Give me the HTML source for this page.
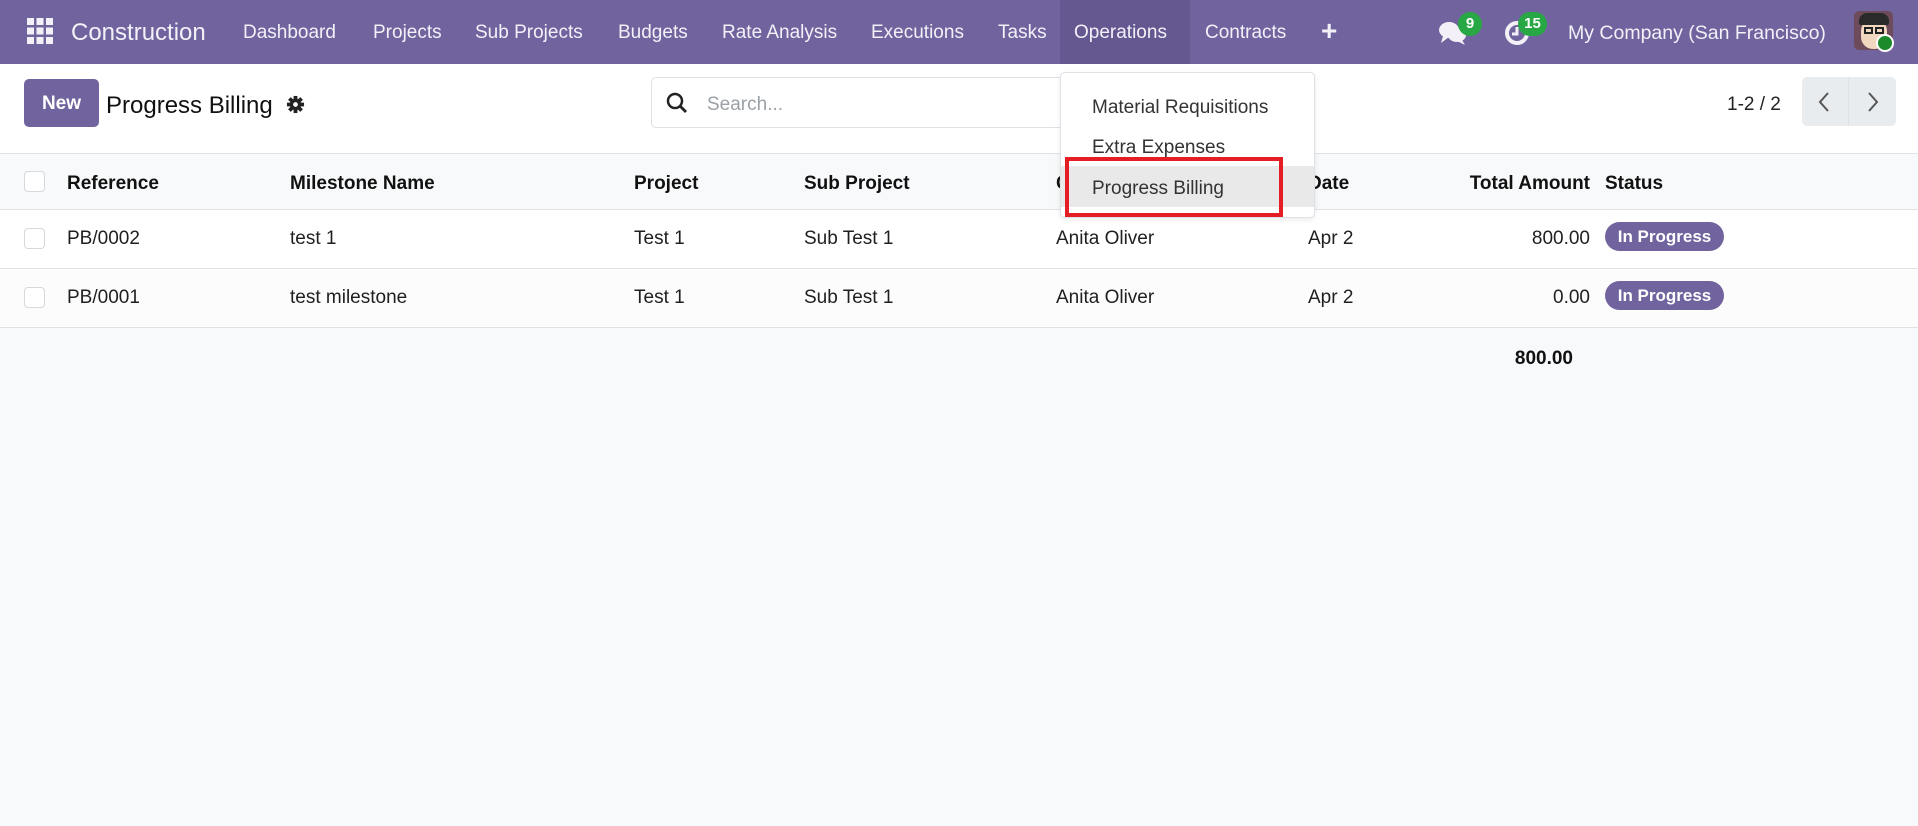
<!DOCTYPE html>
<html><head><meta charset="utf-8"><style>
*{box-sizing:border-box;margin:0;padding:0}
body{width:1918px;height:826px;overflow:hidden;background:#f8f9fa;font-family:"Liberation Sans",sans-serif;color:#1f1f1f;position:relative}
.nav{position:absolute;left:0;top:0;width:1918px;height:64px;background:#71639e;color:#fff}
.nav span{position:absolute;top:22px;font-size:19px;color:#f3f0f8}
.cp{position:absolute;left:0;top:64px;width:1918px;height:90px;background:#fff;border-bottom:1px solid #dee2e6}
.abs{position:absolute}
.th{position:absolute;top:154px;height:56px;width:1918px;background:#f8f9fa;border-bottom:1px solid #dee2e6}
.row{position:absolute;left:0;width:1918px;height:59px;border-bottom:1px solid #dee2e6}
.cell{position:absolute;font-size:19px;top:18px}
.hc{position:absolute;font-size:19px;font-weight:bold;top:19px;color:#111}
.cb{position:absolute;left:24px;width:21px;height:21px;border:1px solid #d5d8dc;border-radius:4px;background:#fff}
.badge{position:absolute;left:1605px;top:12px;width:119px;height:29px;border-radius:15px;background:#71639e;color:#fff;font-weight:bold;font-size:17px;text-align:center;line-height:29px}
.dd{position:absolute;left:1060px;top:72px;width:255px;height:146px;background:#fff;border:1px solid #dee2e6;border-radius:5px;box-shadow:0 2px 6px rgba(0,0,0,.08)}
.dd div{position:absolute;left:31px;font-size:19px;color:#333}
</style></head><body>
<div class="nav">
 <svg class="abs" style="left:27px;top:18px" width="26" height="26" viewBox="0 0 26 26" fill="#f3f0f8">
  <rect x="0" y="0" width="7" height="7"/><rect x="9.5" y="0" width="7" height="7"/><rect x="19" y="0" width="7" height="7"/>
  <rect x="0" y="9.5" width="7" height="7"/><rect x="9.5" y="9.5" width="7" height="7"/><rect x="19" y="9.5" width="7" height="7"/>
  <rect x="0" y="19" width="7" height="7"/><rect x="9.5" y="19" width="7" height="7"/><rect x="19" y="19" width="7" height="7"/></svg>
 <span style="left:71px;top:19px;font-size:24px">Construction</span>
 <span style="left:243px">Dashboard</span>
 <span style="left:373px">Projects</span>
 <span style="left:475px">Sub Projects</span>
 <span style="left:618px">Budgets</span>
 <span style="left:722px">Rate Analysis</span>
 <span style="left:871px">Executions</span>
 <span style="left:998px">Tasks</span>
 <div class="abs" style="left:1060px;top:0;width:130px;height:64px;background:#655891"></div>
 <span style="left:1074px">Operations</span>
 <span style="left:1205px">Contracts</span>
 <span style="left:1321px;top:15px;font-size:28px;font-weight:bold">+</span>
 <svg class="abs" style="left:1438px;top:19px" width="30" height="28" viewBox="0 0 30 28" fill="#f3f0f8"><ellipse cx="11" cy="11" rx="10" ry="8"/><path d="M5 17 L3 24 L11 18Z"/><ellipse cx="19" cy="16" rx="9" ry="7"/><path d="M24 21 L27 26 L19 22Z"/></svg>
 <div class="abs" style="left:1458px;top:12px;width:24px;height:24px;border-radius:12px;background:#28a745;color:#fff;font-size:15px;font-weight:bold;text-align:center;line-height:24px">9</div>
 <svg class="abs" style="left:1504px;top:19px" width="28" height="28" viewBox="0 0 28 28"><circle cx="13" cy="14" r="10" fill="none" stroke="#f3f0f8" stroke-width="4"/><path d="M13 8v7h-5" stroke="#f3f0f8" stroke-width="3" fill="none"/></svg>
 <div class="abs" style="left:1518px;top:12px;width:29px;height:24px;border-radius:12px;background:#28a745;color:#fff;font-size:15px;font-weight:bold;text-align:center;line-height:24px">15</div>
 <span style="left:1568px;font-size:19.5px">My Company (San Francisco)</span>
 <div class="abs" style="left:1854px;top:11px;width:39px;height:39px;border-radius:5px;background:#6d4b5a;overflow:hidden">
  <div class="abs" style="left:7px;top:8px;width:26px;height:30px;border-radius:12px;background:#f1d6c0"></div>
  <div class="abs" style="left:5px;top:2px;width:30px;height:12px;border-radius:8px 8px 2px 2px;background:#2a2a2a"></div>
  <div class="abs" style="left:10px;top:16px;width:9px;height:7px;border:2px solid #222"></div>
  <div class="abs" style="left:21px;top:16px;width:9px;height:7px;border:2px solid #222"></div>
 </div>
 <div class="abs" style="left:1876px;top:34px;width:18px;height:18px;border-radius:9px;background:#1a8a2a;border:2px solid #fff"></div>
</div>
<div class="cp">
 <div class="abs" style="left:24px;top:15px;width:75px;height:48px;background:#71639e;border-radius:5px;color:#fff;font-weight:bold;font-size:19px;text-align:center;line-height:50px">New</div>
 <div class="abs" style="left:106px;top:28px;font-size:24px;color:#111">Progress Billing</div>
 <svg class="abs" style="left:286px;top:31px" width="19" height="19" viewBox="0 0 20 20" fill="#222"><circle cx="10" cy="10" r="6"/><g stroke="#222" stroke-width="4"><line x1="10" y1="1" x2="10" y2="19"/><line x1="1" y1="10" x2="19" y2="10"/><line x1="3.6" y1="3.6" x2="16.4" y2="16.4"/><line x1="16.4" y1="3.6" x2="3.6" y2="16.4"/></g><circle cx="10" cy="10" r="2.5" fill="#fff"/></svg>
 <div class="abs" style="left:651px;top:13px;width:640px;height:51px;border:1px solid #dee2e6;border-radius:5px;background:#fff">
  <svg class="abs" style="left:14px;top:14px" width="22" height="22" viewBox="0 0 22 22"><circle cx="9" cy="9" r="7" fill="none" stroke="#222" stroke-width="2.5"/><line x1="14" y1="14" x2="20" y2="20" stroke="#222" stroke-width="2.8"/></svg>
  <div class="abs" style="left:55px;top:16px;font-size:19px;color:#9aa0a6">Search...</div>
 </div>
 <div class="abs" style="left:1727px;top:30px;font-size:19px;color:#222">1-2 / 2</div>
 <div class="abs" style="left:1802px;top:13px;width:94px;height:49px;background:#e9ecef;border-radius:5px"></div>
 <div class="abs" style="left:1848px;top:13px;width:1px;height:49px;background:#dee2e6"></div>
 <svg class="abs" style="left:1817px;top:27px" width="14" height="22" viewBox="0 0 14 22"><path d="M11 2 L3 11 L11 20" fill="none" stroke="#555" stroke-width="2"/></svg>
 <svg class="abs" style="left:1866px;top:27px" width="14" height="22" viewBox="0 0 14 22"><path d="M3 2 L11 11 L3 20" fill="none" stroke="#555" stroke-width="2"/></svg>
</div>
<div class="th">
 <div class="cb" style="top:17px"></div>
 <div class="hc" style="left:67px">Reference</div>
 <div class="hc" style="left:290px">Milestone Name</div>
 <div class="hc" style="left:634px">Project</div>
 <div class="hc" style="left:804px">Sub Project</div>
 <div class="hc" style="left:1056px">Customer</div>
 <div class="hc" style="left:1308px">Date</div>
 <div class="hc" style="left:1440px;width:150px;text-align:right">Total Amount</div>
 <div class="hc" style="left:1605px">Status</div>
</div>
<div class="row" style="top:210px;background:#fff">
 <div class="cb" style="top:18px"></div>
 <div class="cell" style="left:67px">PB/0002</div>
 <div class="cell" style="left:290px">test 1</div>
 <div class="cell" style="left:634px">Test 1</div>
 <div class="cell" style="left:804px">Sub Test 1</div>
 <div class="cell" style="left:1056px">Anita Oliver</div>
 <div class="cell" style="left:1308px">Apr 2</div>
 <div class="cell" style="left:1440px;width:150px;text-align:right">800.00</div>
 <div class="badge">In Progress</div>
</div>
<div class="row" style="top:269px;background:#fcfcfc">
 <div class="cb" style="top:18px"></div>
 <div class="cell" style="left:67px">PB/0001</div>
 <div class="cell" style="left:290px">test milestone</div>
 <div class="cell" style="left:634px">Test 1</div>
 <div class="cell" style="left:804px">Sub Test 1</div>
 <div class="cell" style="left:1056px">Anita Oliver</div>
 <div class="cell" style="left:1308px">Apr 2</div>
 <div class="cell" style="left:1440px;width:150px;text-align:right">0.00</div>
 <div class="badge">In Progress</div>
</div>
<div class="abs" style="left:1473px;top:348px;width:100px;text-align:right;font-size:19px;font-weight:bold;color:#111">800.00</div>
<div class="dd">
 <div style="top:24px">Material Requisitions</div>
 <div style="top:64px">Extra Expenses</div>
 <div style="left:0;top:93px;width:253px;height:41px;background:#e9e9e9"></div>
 <div style="top:105px">Progress Billing</div>
</div>
<div class="abs" style="left:1065px;top:157px;width:218px;height:60px;border:4px solid #e31e24"></div>
</body></html>
